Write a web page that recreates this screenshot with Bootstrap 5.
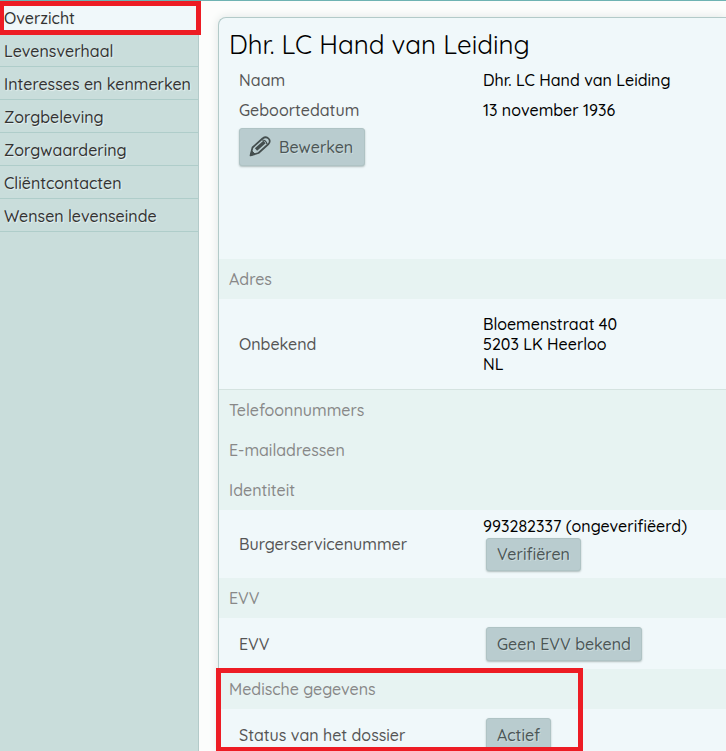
<!DOCTYPE html>
<html lang="nl">
<head>
<meta charset="utf-8">
<meta name="viewport" content="width=device-width, initial-scale=1">
<title>Overzicht</title>
<link href="https://cdn.jsdelivr.net/npm/bootstrap@5.3.0/dist/css/bootstrap.min.css" rel="stylesheet">
<style>
body { font-family: Quicksand, Lato, sans-serif; font-size: 16px; line-height: 20px; font-weight: 500; color: #000; background: #fcfdfc; }
.app-shell { height: 100vh; border-top: 1px solid #6fb3b3; }
.side-menu { flex: 0 0 199px; background: #c9dddb; border-right: 1px solid #b3cac9; }
.side-menu a { display: block; height: 33px; padding: 7px 4px 5px; color: #333; text-decoration: none; white-space: nowrap; border-bottom: 1px solid #afcdca; text-shadow: 1px 1px 1px #e9f2f1; }
.side-menu a.active { background: #f0f8fa; }
.dossier { margin: 16px 0 0 19px; background: #f0f8fa; border: 1px solid #b3cac9; border-width: 1px 0 0 1px; border-radius: 8px 0 0 0; box-shadow: 0 0 10px #dfe5e3; min-width: 0; }
.dossier h1 { font-size: 26px; line-height: 32px; font-weight: 400; padding: 11px 10px 4px; margin: 0; }
.dossier h2 { font-size: 16px; line-height: 20px; font-weight: 500; color: #888; background: #e7f3f2; padding: 10px; margin: 0; }
.person { min-height: 241px; }
.field { display: grid; grid-template-columns: 244px 1fr; align-items: center; padding: 0 0 0 20px; }
.field > :first-child { color: #555; }
.person .field { min-height: 30px; }
.address-row { min-height: 91px; border-bottom: 1px solid #d5e3e0; }
.bsn-row { min-height: 68px; }
.bsn-row > :last-child { padding-bottom: 2px; }
.bsn-row .btn { margin-top: 2px; }
.evv-row { min-height: 51px; padding-top: 1px; }
.btn-soft { font-size: 16px; line-height: 20px; font-weight: 500; color: #4c5656; background: #b9cccf; border: 1px solid #afc3c4; border-radius: 3px; box-shadow: 0 1px 2px #aebcbc; padding: 5px 10px 6px; text-shadow: 1px 1px 0 #ccdcde; }
.btn-value { margin-left: 3px; }
.btn-edit { margin: 3px 0 0 20px; padding: 7px 11px 7px 9px; }
.btn-wide { padding-block: 6px; }
.callout { position: absolute; border: 5px solid #ed1c24; pointer-events: none; }
.callout-menu { inset: 0 -3px auto 0; height: 34px; border-left-width: 4px; }
.callout-status { left: -3px; top: -1px; width: 367px; height: 84px; }
</style>
</head>
<body>
<div class="app-shell d-flex overflow-hidden">
  <nav class="side-menu position-relative" aria-label="Dossier">
    <a href="#" class="active" aria-current="page">Overzicht</a>
    <a href="#">Levensverhaal</a>
    <a href="#">Interesses en kenmerken</a>
    <a href="#">Zorgbeleving</a>
    <a href="#">Zorgwaardering</a>
    <a href="#">Cliëntcontacten</a>
    <a href="#">Wensen levenseinde</a>
    <div class="callout callout-menu"></div>
  </nav>
  <main class="dossier flex-grow-1">
    <section class="person">
      <h1>Dhr. LC Hand van Leiding</h1>
      <div class="field"><span>Naam</span><span>Dhr. LC Hand van Leiding</span></div>
      <div class="field"><span>Geboortedatum</span><span>13 november 1936</span></div>
      <button type="button" class="btn btn-soft btn-edit d-inline-flex align-items-center gap-2">
        <svg width="22" height="22" viewBox="0 0 22 22" fill="none" stroke="#444e4e" stroke-linejoin="round" aria-hidden="true"><path d="M1.500 19.500 3.500 11.500 13.500 2.500Q17 0 19.500 2.500T19.500 8L9.500 17Z" stroke-width="1.700"/><path d="M1.500 19.500 2.800 15 6 18Z" fill="#444e4e"/><path d="M7 13.500 15.500 6" stroke-width="3.400"/><path d="M13 4Q17 4 18 8" stroke-width="1.200"/></svg>
        Bewerken
      </button>
    </section>
    <h2>Adres</h2>
    <div class="field address-row"><span>Onbekend</span><address class="m-0">Bloemenstraat 40<br>5203 LK Heerloo<br>NL</address></div>
    <h2>Telefoonnummers</h2>
    <h2>E-mailadressen</h2>
    <h2>Identiteit</h2>
    <div class="field bsn-row"><span>Burgerservicenummer</span><div><div>993282337 (ongeverifiëerd)</div><button type="button" class="btn btn-soft btn-value">Verifiëren</button></div></div>
    <h2>EVV</h2>
    <div class="field evv-row"><span>EVV</span><div><button type="button" class="btn btn-soft btn-value btn-wide">Geen EVV bekend</button></div></div>
    <section class="position-relative">
      <h2>Medische gegevens</h2>
      <div class="field evv-row"><span>Status van het dossier</span><div><button type="button" class="btn btn-soft btn-value btn-wide">Actief</button></div></div>
      <div class="callout callout-status"></div>
    </section>
  </main>
</div>
<script src="https://cdn.jsdelivr.net/npm/bootstrap@5.3.0/dist/js/bootstrap.bundle.min.js"></script>
</body>
</html>
